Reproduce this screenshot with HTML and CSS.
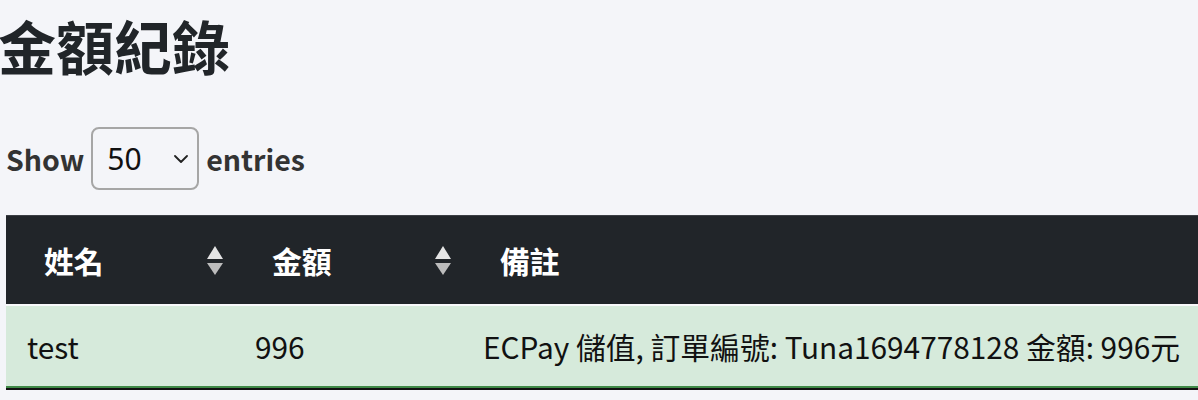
FILE: index.html
```html
<!DOCTYPE html>
<html lang="zh-Hant">
<head>
<meta charset="utf-8">
<title>金額紀錄</title>
<link rel="stylesheet" href="styles.css">
</head>
<body>
<div class="page">
  <h1 class="title">金額紀錄</h1>
  <div class="length">
    <span class="length-label">Show</span>
    <div class="select">
      <span class="select-value">50</span>
      <svg class="chevron" width="14" height="8" viewBox="0 0 14 8"><path d="M1 1 L7 7 L13 1" fill="none" stroke="#222" stroke-width="1.8" stroke-linecap="round" stroke-linejoin="round"/></svg>
    </div>
    <span class="length-label">entries</span>
  </div>
  <div class="table-wrap">
    <table class="records">
      <colgroup>
        <col class="col-narrow">
        <col class="col-narrow">
        <col>
      </colgroup>
      <thead>
        <tr>
          <th class="sortable"><div class="th-inner"><span>姓名</span><svg class="sort" width="16" height="29" viewBox="0 0 16 29"><polygon points="8,0 16,13 0,13" fill="#e4e4e4"/><polygon points="0,17 16,17 8,29" fill="#bcbcbc"/></svg></div></th>
          <th class="sortable"><div class="th-inner"><span>金額</span><svg class="sort" width="16" height="29" viewBox="0 0 16 29"><polygon points="8,0 16,13 0,13" fill="#e4e4e4"/><polygon points="0,17 16,17 8,29" fill="#bcbcbc"/></svg></div></th>
          <th>備註</th>
        </tr>
      </thead>
      <tbody>
        <tr>
          <td>test</td>
          <td>996</td>
          <td>ECPay 儲值, 訂單編號: Tuna1694778128 金額: 996元</td>
        </tr>
      </tbody>
    </table>
  </div>
</div>
</body>
</html>
```

FILE: styles.css
```css
html, body {
  margin: 0;
  padding: 0;
  background: #f4f5f9;
  font-family: "Noto Sans CJK TC", "Noto Sans", sans-serif;
  overflow: hidden;
}

.page {
  padding: 0 0 0 6px;
}

.title {
  margin: 0 0 0 -8px;
  padding-top: 9px;
  font-size: 58px;
  line-height: 72px;
  font-weight: 700;
  color: #212529;
}

.length {
  display: flex;
  align-items: center;
  gap: 7px;
  margin-top: 46px;
  height: 63px;
}

.length-label {
  font-size: 28.5px;
  font-weight: 700;
  color: #333;
}

.select {
  box-sizing: border-box;
  width: 108px;
  height: 63px;
  border: 2px solid #a6a6a6;
  border-radius: 8px;
  display: flex;
  align-items: center;
  justify-content: space-between;
  padding: 0 9px 0 14px;
  background: #f4f5f9;
}

.select-value {
  font-family: "Noto Sans", sans-serif;
  font-size: 30px;
  color: #111;
}

.table-wrap {
  margin-top: 25px;
  width: 1200px;
  border-bottom: 2px solid #111;
}

.records {
  width: 100%;
  border-collapse: collapse;
  table-layout: fixed;
  font-size: 29.8px;
}

.col-narrow {
  width: 228px;
}

.records thead tr {
  background: #212529;
  border-top: 1px solid #3b3e44;
  border-bottom: 2px solid #f8f9fa;
}

.records th {
  text-align: left;
  color: #fff;
  font-weight: 700;
  padding: 20px 38px;
  line-height: 48px;
}

.records th.sortable {
  padding-right: 11px;
}

.th-inner {
  display: flex;
  align-items: center;
  justify-content: space-between;
}

.sort {
  display: block;
}

.records tbody tr {
  background: #d6eadb;
  border-top: 2px solid #dfe2e6;
  border-bottom: 2px solid #3f8a47;
}

.records td {
  padding: 16px 21px;
  line-height: 48px;
  color: #111;
  white-space: nowrap;
}
```
